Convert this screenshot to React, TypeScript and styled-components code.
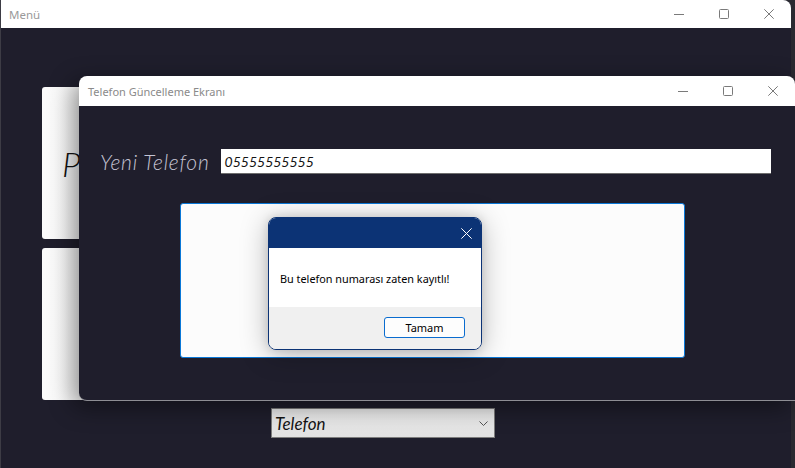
import React from "react";
import styled, { createGlobalStyle } from "styled-components";

const Global = createGlobalStyle`
  html, body { margin: 0; padding: 0; background: #24232b; }
  * { box-sizing: border-box; }
`;

const Desktop = styled.div`
  position: relative;
  width: 795px;
  height: 468px;
  overflow: hidden;
  background: #2a2a31;
  font-family: "Noto Sans", "Open Sans", sans-serif;
`;

const OuterWindow = styled.div`
  width: 791px;
  height: 468px;
  display: flex;
  flex-direction: column;
  border-radius: 0 8px 0 0;
  overflow: hidden;
  border-left: 1px solid #3d3c45;
  background: #1f1e2c;
`;

const TitleBar = styled.div<{ $h: number; $pad: number }>`
  height: ${(p) => p.$h}px;
  flex: 0 0 ${(p) => p.$h}px;
  background: #ffffff;
  display: flex;
  align-items: center;
  justify-content: space-between;
  padding-left: ${(p) => p.$pad}px;
`;

const Title = styled.span<{ $size: number; $color: string }>`
  font-family: "Noto Sans", sans-serif;
  font-size: ${(p) => p.$size}px;
  color: ${(p) => p.$color};
  white-space: nowrap;
`;

const Controls = styled.div`
  display: flex;
  height: 100%;
`;

const CtrlButton = styled.div`
  width: 45px;
  height: 100%;
  display: flex;
  align-items: center;
  justify-content: center;
`;

const OuterBody = styled.div`
  flex: 1;
  display: flex;
  flex-direction: column;
  padding: 59px 0 0 41px;
`;

const Card = styled.div<{ $mt: number }>`
  width: 300px;
  height: 152px;
  margin-top: ${(p) => p.$mt}px;
  background: linear-gradient(90deg, #fbfbfb 0%, #f4f4f4 100%);
  border-radius: 3px;
  display: flex;
  align-items: center;
  padding-left: 20px;
`;

const CardText = styled.span`
  font-family: "Lato", sans-serif;
  font-style: italic;
  font-weight: 300;
  font-size: 34px;
  color: #111;
`;

const ComboBox = styled.div`
  margin: 8px 0 0 229px;
  width: 224px;
  height: 30px;
  background: linear-gradient(180deg, #efefef 0%, #e2e2e2 100%);
  border: 1px solid #7d7d7d;
  display: flex;
  align-items: center;
  justify-content: space-between;
  padding: 0 6px 0 3px;
`;

const ComboText = styled.span`
  font-family: "Lato", sans-serif;
  font-style: italic;
  font-weight: 400;
  font-size: 17px;
  color: #141414;
`;

const InnerWindow = styled.div`
  position: absolute;
  left: 79px;
  top: 76px;
  width: 716px;
  height: 325px;
  display: flex;
  flex-direction: column;
  border-radius: 8px 8px 0 8px;
  overflow: hidden;
  background: #1f1e2c;
  border-bottom: 1px solid #8e8e94;
  box-shadow: -6px 6px 24px rgba(0, 0, 0, 0.45);
`;

const InnerBody = styled.div`
  flex: 1;
  display: flex;
  flex-direction: column;
  padding: 43px 24px 0 21px;
`;

const FieldRow = styled.div`
  display: flex;
  align-items: center;
  height: 25px;
  gap: 11px;
`;

const FieldLabel = styled.span`
  font-family: "Lato", sans-serif;
  font-style: italic;
  font-weight: 300;
  font-size: 21px;
  letter-spacing: 0.8px;
  color: #c4c3d3;
  white-space: nowrap;
`;

const TextInput = styled.div`
  flex: 1;
  height: 25px;
  background: #fff;
  border-bottom: 1px solid #6d6d6d;
  display: flex;
  align-items: center;
  padding: 1px 0 0 4px;
  font-family: "Lato", sans-serif;
  font-style: italic;
  font-weight: 400;
  font-size: 14px;
  color: #141414;
`;

const Panel = styled.div`
  margin: 29px 0 0 80px;
  width: 505px;
  height: 155px;
  background: #fcfcfc;
  border: 1px solid #0a78d7;
  border-radius: 3px;
`;

const Dialog = styled.div`
  position: absolute;
  left: 268px;
  top: 217px;
  width: 214px;
  height: 133px;
  display: flex;
  flex-direction: column;
  border: 1px solid #0c3375;
  border-radius: 8px;
  overflow: hidden;
  background: #fff;
  box-shadow: 0 4px 28px rgba(0, 0, 0, 0.28), 0 0 10px rgba(0, 0, 0, 0.12);
`;

const DialogHeader = styled.div`
  height: 30px;
  flex: 0 0 30px;
  background: #0c3375;
  display: flex;
  justify-content: flex-end;
  align-items: center;
  padding-right: 9px;
`;

const DialogMessage = styled.div`
  height: 59px;
  flex: 0 0 59px;
  display: flex;
  align-items: center;
  padding: 2px 0 0 11px;
  font-family: "Noto Sans", sans-serif;
  font-size: 10.85px;
  color: #000;
  white-space: nowrap;
`;

const DialogFooter = styled.div`
  flex: 1;
  background: #f0f0f0;
  display: flex;
  justify-content: flex-end;
  align-items: flex-start;
  padding: 10px 16px 0 0;
`;

const DialogButton = styled.div`
  width: 81px;
  height: 21px;
  background: #fdfdfd;
  border: 1px solid #0a6ccf;
  border-radius: 3px;
  display: flex;
  align-items: center;
  justify-content: center;
  font-family: "Noto Sans", sans-serif;
  font-size: 11px;
  color: #000;
`;

const Minimize = ({ c = "#7a7a7a" }: { c?: string }) => (
  <svg width="10" height="10" viewBox="0 0 10 10">
    <line x1="0" y1="5.5" x2="10" y2="5.5" stroke={c} strokeWidth="1" />
  </svg>
);
const Maximize = ({ c = "#7a7a7a" }: { c?: string }) => (
  <svg width="10" height="10" viewBox="0 0 10 10">
    <rect x="0.5" y="0.5" width="9" height="9" rx="1" fill="none" stroke={c} strokeWidth="1" />
  </svg>
);
const Close = ({ c = "#7a7a7a", s = 10 }: { c?: string; s?: number }) => (
  <svg width={s} height={s} viewBox="0 0 10 10">
    <path d="M0.3 0.3 L9.7 9.7 M9.7 0.3 L0.3 9.7" stroke={c} strokeWidth={10 / s} fill="none" />
  </svg>
);
const Chevron = () => (
  <svg width="9" height="5" viewBox="0 0 9 5">
    <path d="M0.5 0.5 L4.5 4.5 L8.5 0.5" stroke="#555" strokeWidth="1" fill="none" />
  </svg>
);

const WindowControls = () => (
  <Controls>
    <CtrlButton><Minimize /></CtrlButton>
    <CtrlButton><Maximize /></CtrlButton>
    <CtrlButton><Close /></CtrlButton>
  </Controls>
);

export default function App() {
  return (
    <>
      <Global />
      <Desktop>
        <OuterWindow>
          <TitleBar $h={28} $pad={8}>
            <Title $size={11.5} $color="#9a9a9a">Menü</Title>
            <WindowControls />
          </TitleBar>
          <OuterBody>
            <Card $mt={0}>
              <CardText>P</CardText>
            </Card>
            <Card $mt={9} />
            <ComboBox>
              <ComboText>Telefon</ComboText>
              <Chevron />
            </ComboBox>
          </OuterBody>
        </OuterWindow>

        <InnerWindow>
          <TitleBar $h={30} $pad={9}>
            <Title $size={11} $color="#8a8a8a">Telefon Güncelleme Ekranı</Title>
            <WindowControls />
          </TitleBar>
          <InnerBody>
            <FieldRow>
              <FieldLabel>Yeni Telefon</FieldLabel>
              <TextInput>05555555555</TextInput>
            </FieldRow>
            <Panel />
          </InnerBody>
        </InnerWindow>

        <Dialog>
          <DialogHeader>
            <Close c="#ffffff" s={11} />
          </DialogHeader>
          <DialogMessage>Bu telefon numarası zaten kayıtlı!</DialogMessage>
          <DialogFooter>
            <DialogButton>Tamam</DialogButton>
          </DialogFooter>
        </Dialog>
      </Desktop>
    </>
  );
}
